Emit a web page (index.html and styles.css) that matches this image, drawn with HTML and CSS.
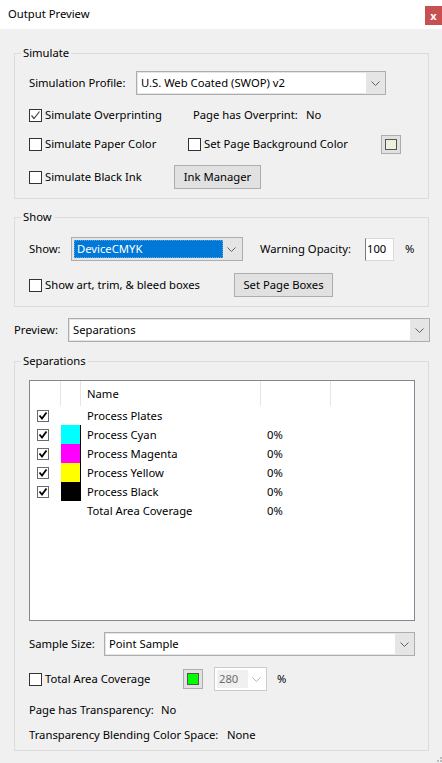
FILE: index.html
```html
<!DOCTYPE html>
<html>
<head>
<title>Output Preview</title>
<link rel="stylesheet" href="styles.css">
</head>
<body>
<div class="titlebar">
<span class="title">Output Preview</span>
<span class="close">x</span>
</div>
<div class="dialog">

<fieldset class="group sim">
<legend>Simulate</legend>
<div class="row r1">
<span class="lbl" style="width:107px">Simulation Profile:</span>
<div class="combo" style="width:250px"><span class="field">U.S. Web Coated (SWOP) v2</span><span class="arrow"><svg width="9" height="5" viewBox="0 0 9 5"><path d="M.5 .5L4.5 4.5L8.5 .5" fill="none" stroke="#606060"/></svg></span></div>
</div>
<div class="row r2">
<label class="cb" style="width:164px"><span class="box"><svg width="11" height="11" viewBox="0 0 11 11"><path d="M1.5 5.5L4 8.5L9.5 1.5" fill="none" stroke="#444" stroke-width="1.2"/></svg></span>Simulate Overprinting</label>
<span style="width:113px">Page has Overprint:</span><span>No</span>
</div>
<div class="row r3">
<label class="cb" style="width:159px"><span class="box"></span>Simulate Paper Color</label>
<label class="cb" style="width:193px"><span class="box"></span>Set Page Background Color</label>
<span class="swatchbtn"><span class="paper"></span></span>
</div>
<div class="row r4">
<label class="cb" style="width:145px"><span class="box"></span>Simulate Black Ink</label>
<span class="btn" style="width:87px">Ink Manager</span>
</div>
</fieldset>

<fieldset class="group show">
<legend>Show</legend>
<div class="row r1">
<span class="lbl" style="width:42px">Show:</span>
<div class="combo focus" style="width:172px"><span class="field">DeviceCMYK</span><span class="arrow"><svg width="9" height="5" viewBox="0 0 9 5"><path d="M.5 .5L4.5 4.5L8.5 .5" fill="none" stroke="#606060"/></svg></span></div>
<span class="lbl" style="width:105px;margin-left:17px">Warning Opacity:</span>
<span class="num">100</span>
<span class="pct">%</span>
</div>
<div class="row r2">
<label class="cb" style="width:205px"><span class="box"></span>Show art, trim, &amp; bleed boxes</label>
<span class="btn" style="width:99px">Set Page Boxes</span>
</div>
</fieldset>

<div class="row preview">
<span class="lbl" style="width:54px">Preview:</span>
<div class="combo" style="width:362px"><span class="field">Separations</span><span class="arrow"><svg width="9" height="5" viewBox="0 0 9 5"><path d="M.5 .5L4.5 4.5L8.5 .5" fill="none" stroke="#606060"/></svg></span></div>
</div>

<fieldset class="group seps">
<legend>Separations</legend>
<div class="list">
<div class="lhead"><span></span><span></span><span class="name">Name</span><span></span><span class="last"></span></div>
<div class="lrow"><span class="lc"><span class="tick"><svg width="10" height="10" viewBox="0 0 10 10"><path d="M1.5 4.5L4 7.5L8.5 1.5" fill="none" stroke="#000" stroke-width="1.8"/></svg></span></span><span></span><span class="name">Process Plates</span><span class="val"></span></div>
<div class="lrow"><span class="lc"><span class="tick"><svg width="10" height="10" viewBox="0 0 10 10"><path d="M1.5 4.5L4 7.5L8.5 1.5" fill="none" stroke="#000" stroke-width="1.8"/></svg></span></span><span class="ink cyan"></span><span class="name">Process Cyan</span><span class="val">0%</span></div>
<div class="lrow"><span class="lc"><span class="tick"><svg width="10" height="10" viewBox="0 0 10 10"><path d="M1.5 4.5L4 7.5L8.5 1.5" fill="none" stroke="#000" stroke-width="1.8"/></svg></span></span><span class="ink magenta"></span><span class="name">Process Magenta</span><span class="val">0%</span></div>
<div class="lrow"><span class="lc"><span class="tick"><svg width="10" height="10" viewBox="0 0 10 10"><path d="M1.5 4.5L4 7.5L8.5 1.5" fill="none" stroke="#000" stroke-width="1.8"/></svg></span></span><span class="ink yellow"></span><span class="name">Process Yellow</span><span class="val">0%</span></div>
<div class="lrow"><span class="lc"><span class="tick"><svg width="10" height="10" viewBox="0 0 10 10"><path d="M1.5 4.5L4 7.5L8.5 1.5" fill="none" stroke="#000" stroke-width="1.8"/></svg></span></span><span class="ink black"></span><span class="name">Process Black</span><span class="val">0%</span></div>
<div class="lrow"><span class="lc"></span><span></span><span class="name">Total Area Coverage</span><span class="val">0%</span></div>
</div>
<div class="row sample">
<span class="lbl" style="width:75px">Sample Size:</span>
<div class="combo" style="width:311px"><span class="field">Point Sample</span><span class="arrow"><svg width="9" height="5" viewBox="0 0 9 5"><path d="M.5 .5L4.5 4.5L8.5 .5" fill="none" stroke="#606060"/></svg></span></div>
</div>
<div class="row tac">
<label class="cb" style="width:154px"><span class="box"></span>Total Area Coverage</label>
<span class="swatchbtn big"><span class="green"></span></span>
<div class="combo off"><span class="field">280</span><span class="arrow"><svg width="9" height="5" viewBox="0 0 9 5"><path d="M.5 .5L4.5 4.5L8.5 .5" fill="none" stroke="#b4b4b4"/></svg></span></div>
<span class="pct2">%</span>
</div>
<div class="row info i1"><span style="width:132px">Page has Transparency:</span><span>No</span></div>
<div class="row info i2"><span style="width:198px">Transparency Blending Color Space:</span><span>None</span></div>
</fieldset>

</div>
<svg class="grip" width="5" height="5" viewBox="0 0 5 5"><rect x="3" y="0" width="2" height="2" fill="#bdbdbd"/><rect x="0" y="3" width="2" height="2" fill="#bdbdbd"/><rect x="3" y="3" width="2" height="2" fill="#bdbdbd"/></svg>
</body>
</html>
```

FILE: styles.css
```css
*{box-sizing:border-box;}
body{
margin:0;
width:442px;
height:763px;
position:relative;
overflow:hidden;
background:#f0f0f0;
color:#000;
font-family:"Noto Sans","Liberation Sans",sans-serif;
font-size:11.25px;
line-height:16px;}

/* window caption */
.titlebar{
height:29px;
background:#fff;
display:flex;
align-items:flex-start;
justify-content:space-between;}
.title{padding:6px 0 0 8px;}
.close{
margin-top:6px;
width:17px;
height:19px;
background:#c75050;
color:#fff;
font-weight:bold;
font-size:11px;
display:flex;
align-items:center;
justify-content:center;}

.dialog{padding:16px 13px 0 14px;}

/* group boxes */
.group{
margin:0;
min-width:0;
border:1px solid #dcdcdc;
padding:10px 14px 9px 14px;}
legend{margin-left:-8px;padding:0 2px;line-height:16px;}

.row{display:flex;align-items:center;white-space:nowrap;}
.lbl{flex:none;}
.row > span, .row > label{flex:none;}

.sim .r1{height:24px;}
.sim .r2{height:20px;margin-top:10px;}
.sim .r3{height:20px;margin-top:9px;}
.sim .r4{height:24px;margin-top:11px;}

.show{margin-top:10px;padding-top:12px;}
.show .r1{height:24px;}
.show .r2{height:24px;margin-top:12px;}

.preview{height:24px;margin-top:11px;}

.seps{margin-top:11px;padding-top:11px;padding-bottom:6px;}

/* checkboxes */
.cb{display:flex;align-items:center;}
.box{
width:13px;
height:13px;
border:1px solid #333;
background:#fff;
margin-right:3px;
display:flex;
align-items:center;
justify-content:center;}

/* drop-down lists */
.combo{
flex:none;
display:flex;
height:24px;
border:1px solid #adadad;
background:#e5e5e5;
padding:1px;}
.combo .field{
flex:1;
background:#fff;
padding-left:3px;
display:flex;
align-items:center;}
.combo .arrow{
width:18px;
display:flex;
align-items:center;
justify-content:center;}
.combo.focus{padding:2px;}
.combo.focus .field{
background:#0078d7;
color:#fff;
padding-left:2px;
border:1px dotted #5aa6e6;}
.combo.focus .arrow{width:17px;}
.combo.off{
width:53px;
margin-left:11px;
border-color:#cccccc;
background:#fff;
padding:2px;}
.combo.off .field{background:#f0f0f0;color:#6d6d6d;padding-left:2px;flex:none;width:31px;}

/* push buttons */
.btn{
flex:none;
height:24px;
border:1px solid #adadad;
background:#e1e1e1;
display:flex;
align-items:center;
justify-content:center;}

.num{
width:29px;
height:23px;
background:#fff;
border:1px solid #d9d9d9;
border-left-color:#7a7a7a;
padding-left:1px;
display:flex;
align-items:center;}
.pct{margin-left:11px;}

/* colour buttons */
.swatchbtn{
width:20px;
height:19px;
border:1px solid #adadad;
background:#e1e1e1;
padding:3px;}
.swatchbtn > span{display:block;height:100%;border:1px solid #555;}
.paper{background:#efefdc;}
.swatchbtn.big{height:20px;}
.green{background:#00ff00;}

/* separations list */
.list{
width:386px;
height:241px;
border:1px solid #828790;
background:#fff;}
.lhead, .lrow{
display:grid;
grid-template-columns:31px 20px 180px 70px 1fr;}
.lhead{height:25px;}
.lhead span{border-right:1px solid #e5e5e5;display:flex;align-items:center;}
.lhead span.last{border-right:0;}
.lrow{height:19px;align-items:center;}
.lrow > span{height:19px;display:flex;align-items:center;}
.name{padding-left:6px;}
.val{padding-left:6px;}
.lc{padding-left:7px;}
.tick{
width:12px;
height:12px;
border:1px solid #6a6a6a;
background:#fff;
display:flex;
align-items:center;
justify-content:center;}
.ink{border-right:1px solid #000;}
.cyan{background:#00ffff;}
.magenta{background:#ff00ff;}
.yellow{background:#ffff00;}
.black{background:#000;}

.sample{height:24px;margin-top:11px;}
.tac{height:24px;margin-top:11px;}
.pct2{margin-left:10px;}
.info{height:18px;}
.i1{margin-top:10px;}
.i2{margin-top:7px;}

.grip{position:absolute;right:0;bottom:1px;}
```
